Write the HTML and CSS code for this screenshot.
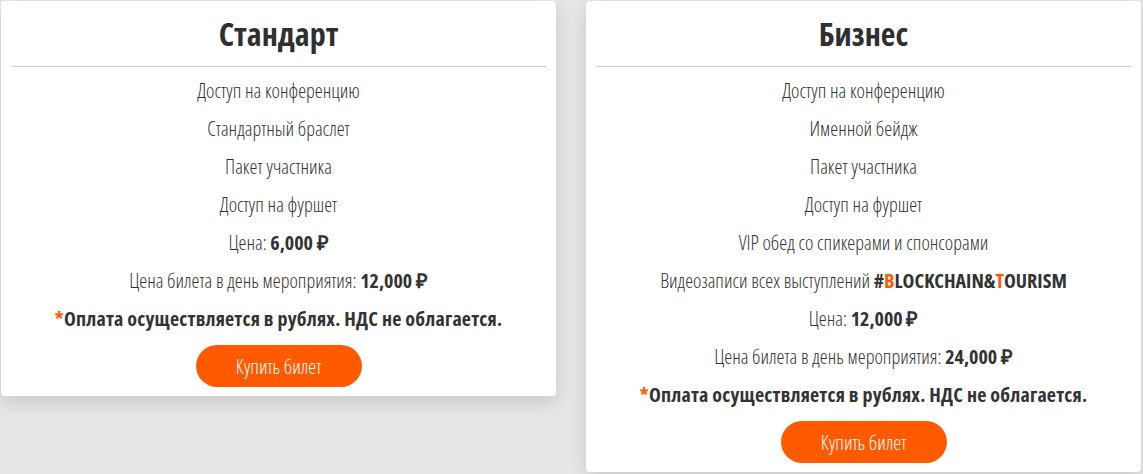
FILE: index.html
```html
<!DOCTYPE html>
<html lang="ru">
<head>
<meta charset="utf-8">
<link rel="stylesheet" href="styles.css">
</head>
<body>
<div class="page">
  <div class="card">
    <h2 class="title">Стандарт</h2>
    <div class="divider"></div>
    <ul class="features">
      <li>Доступ на конференцию</li>
      <li>Стандартный браслет</li>
      <li>Пакет участника</li>
      <li>Доступ на фуршет</li>
      <li>Цена: <b>6,000 ₽</b></li>
      <li>Цена билета в день мероприятия: <b>12,000 ₽</b></li>
      <li class="note"><span class="accent">*</span>Оплата осуществляется в рублях. НДС не облагается.</li>
    </ul>
    <a class="buy" href="#">Купить билет</a>
  </div>
  <div class="card">
    <h2 class="title">Бизнес</h2>
    <div class="divider"></div>
    <ul class="features">
      <li>Доступ на конференцию</li>
      <li>Именной бейдж</li>
      <li>Пакет участника</li>
      <li>Доступ на фуршет</li>
      <li>VIP обед со спикерами и спонсорами</li>
      <li>Видеозаписи всех выступлений <b>#<span class="accent">B</span>LOCKCHAIN&amp;<span class="accent">T</span>OURISM</b></li>
      <li>Цена: <b>12,000 ₽</b></li>
      <li>Цена билета в день мероприятия: <b>24,000 ₽</b></li>
      <li class="note"><span class="accent">*</span>Оплата осуществляется в рублях. НДС не облагается.</li>
    </ul>
    <a class="buy" href="#">Купить билет</a>
  </div>
</div>
</body>
</html>
```

FILE: styles.css
```css
* { box-sizing: border-box; }
html, body { margin: 0; padding: 0; }
body {
  background: #e6e7e9;
  font-family: "Open Sans", "Liberation Sans", sans-serif;
  font-stretch: 75%;
  color: #333;
  width: 1143px;
  height: 474px;
  overflow: hidden;
}
.page {
  display: flex;
  align-items: flex-start;
  gap: 30px;
  padding: 1px 0 0 1px;
}
.card {
  width: 555px;
  background: #fff;
  border-radius: 4px;
  box-shadow: 0 6px 20px rgba(0,0,0,0.14);
  padding: 10px 10px 9px;
  display: flex;
  flex-direction: column;
  align-items: center;
}
.title {
  margin: 0;
  font-size: 32px;
  line-height: 46px;
  font-weight: 700;
  color: #2f2f2f;
  margin-bottom: 9px;
}
.divider {
  width: 100%;
  height: 1px;
  background: #cfcfcf;
}
.features {
  list-style: none;
  margin: 13px 0 0;
  padding: 0;
  display: flex;
  flex-direction: column;
  align-items: center;
  gap: 16px;
}
.features li {
  font-size: 20px;
  line-height: 22px;
  font-weight: 300;
  color: #333;
  white-space: nowrap;
}
.features b { font-weight: 700; }
.features .note {
  font-weight: 700;
  font-size: 20px;
  letter-spacing: 0.2px;
}
.accent { color: #ff5a00; }
.buy {
  margin-top: 15px;
  width: 166px;
  height: 42px;
  border-radius: 21px;
  background: #ff5a00;
  color: #fff;
  text-decoration: none;
  font-size: 20px;
  font-weight: 300;
  display: flex;
  align-items: center;
  justify-content: center;
}
```
